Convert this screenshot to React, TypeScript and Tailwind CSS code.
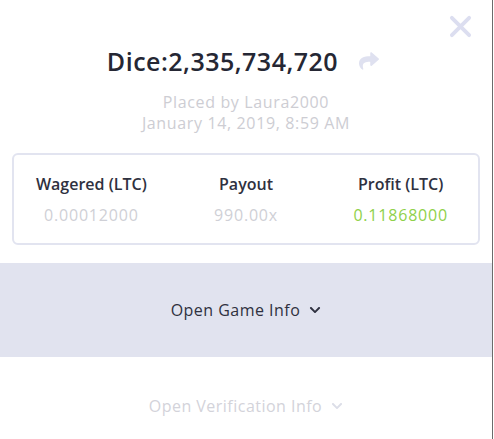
import { FaChevronDown, FaShare } from "react-icons/fa"

const font = { fontFamily: "'Open Sans', Lato, sans-serif" }

const Stat = ({ label, value, green }: { label: string, value: string, green?: boolean }) => (
    <div className="flex flex-col items-center">
        <div className="text-[16px] font-semibold text-[#2f3140] leading-5">{label}</div>
        <div className={`text-[16px] mt-[11px] leading-5 tracking-[0.05em] ${green ? "text-[#8fd14a]" : "text-[#cfd0d6]"}`}>{value}</div>
    </div>
)

export default function App() {
    return (
        <div className="w-[494px] h-[439px] bg-white flex overflow-hidden" style={font}>
            <div className="w-[492px] flex flex-col relative">
                <button className="absolute right-[20px] top-[15px] text-[#dcdef0]">
                    <svg width="23" height="23" viewBox="0 0 24 24">
                        <path d="M3 3 L21 21 M21 3 L3 21" stroke="currentColor" strokeWidth="4" strokeLinecap="round" />
                    </svg>
                </button>
                <div className="shrink-0 flex items-center justify-center pt-[45px] pr-[6px]">
                    <span className="text-[25px] font-semibold text-[#252734] leading-8 tracking-[0.02em]">Dice:2,335,734,720</span>
                    <FaShare className="ml-[21px] text-[#dfe1f0] text-[20px]" />
                </div>
                <div className="shrink-0 flex flex-col items-center mt-[15px] text-[16px] text-[#cdcdd3] leading-[21px] tracking-[0.04em]">
                    <div>Placed by Laura2000</div>
                    <div>January 14, 2019, 8:59 AM</div>
                </div>
                <div className="shrink-0 mx-[12px] mt-[19px] h-[92px] border-2 border-[#e2e4f0] rounded-md grid grid-cols-3 items-center">
                    <Stat label="Wagered (LTC)" value="0.00012000" />
                    <Stat label="Payout" value="990.00x" />
                    <Stat label="Profit (LTC)" value="0.11868000" green />
                </div>
                <div className="shrink-0 mt-[18px] h-[94px] bg-[#e1e3ef] flex items-center justify-center text-[16px] text-[#2f3140] tracking-[0.03em]">
                    Open Game Info
                    <FaChevronDown className="ml-[9px] text-[12px]" />
                </div>
                <div className="shrink-0 h-[98px] flex items-center justify-center text-[16px] text-[#d3d3da] tracking-[0.03em]">
                    Open Verification Info
                    <FaChevronDown className="ml-[9px] text-[12px] text-[#dcdee8]" />
                </div>
            </div>
            <div className="w-px bg-[#6b6b6b]" />
        </div>
    )
}
